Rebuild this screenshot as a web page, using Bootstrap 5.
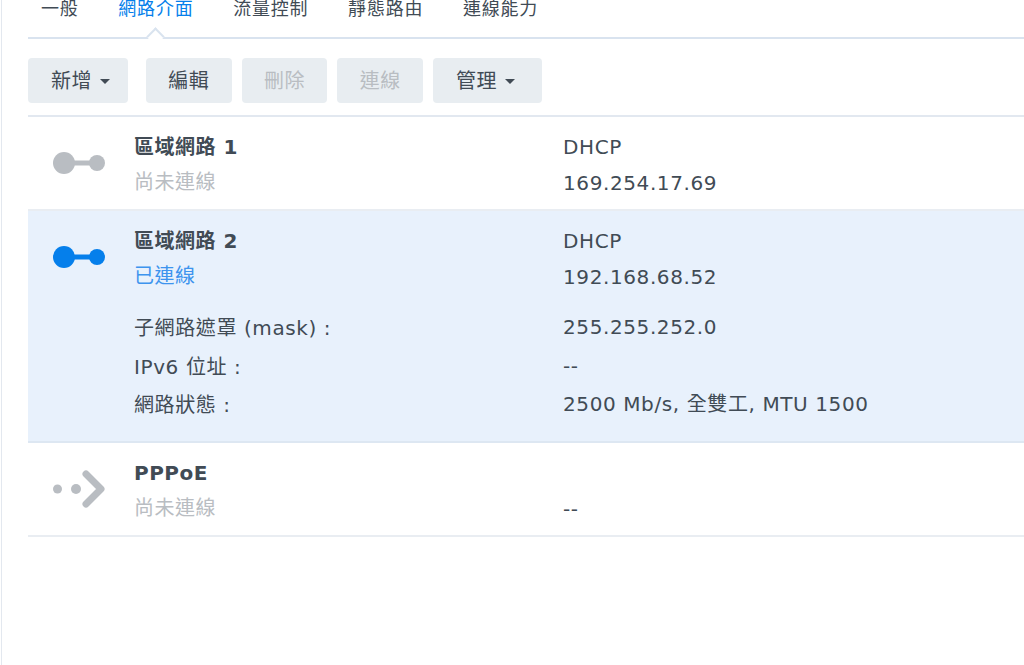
<!DOCTYPE html>
<html lang="zh-Hant"><head><meta charset="utf-8">
<link href="https://cdn.jsdelivr.net/npm/bootstrap@5.3.0/dist/css/bootstrap.min.css" rel="stylesheet">
<style>
html,body{height:100%;overflow:hidden}
body{font-family:"DejaVu Sans","Noto Sans CJK TC",sans-serif;color:#414b55;background:#fff}
.shell{height:665px;margin-left:1px;border-left:1px solid #e3e8ef;padding-left:26px;overflow:hidden}
.tabbar{margin-top:-6px;height:45px;border-bottom:2px solid #d9e3ef}
.tabitem{font-size:18px;line-height:30px;padding:0 13px;margin-right:13.7px;letter-spacing:.8px;color:#414b55}
.tabitem.on{color:#057feb;position:relative}
.tabitem.on::after{content:"";position:absolute;left:50%;bottom:-6px;width:13px;height:13px;margin-left:-7px;background:#fff;border-left:2px solid #d9e3ef;border-top:2px solid #d9e3ef;transform:rotate(45deg)}
.toolbar{gap:10px;padding:19px 0 12px;border-bottom:2px solid #e2e8f0;position:relative}
.tbtn{height:45px;border:0;border-radius:4px;background:#e8edf1;color:#414b55;font-size:20px;padding:2px 0 0;line-height:43px;display:flex;align-items:center;justify-content:center;letter-spacing:.5px}
.tbtn.lead-in{justify-content:flex-start;padding-left:23px}
.tbtn:hover{background:#e8edf1;color:#414b55}
.tbtn.btn:disabled{background:#e8edf1;color:#b9bdc2;opacity:1}
.w1{width:100px}.w2{width:85.7px}.w3{width:109px}
.caret{width:0;height:0;border:5.5px solid transparent;border-top-color:#414b55;border-bottom:0;margin-left:8px}
.netrow{display:flex;border-bottom:2px solid #e9edf2;font-size:20px;line-height:37.5px}
.netrow.on{background:#e8f1fc;border-bottom-color:#dde7f2}
.icoc{width:106px;flex:none;padding:15px 0 0 25px}
.namec{width:429px;flex:none}
.r1{height:94px;padding-top:12px}.r2{height:232px;padding-top:12px}.r3{height:94px;padding-top:12px}
.ttl{font-weight:700;letter-spacing:.5px;color:#414b55;line-height:37px}
.sub{color:#b9bdc2;line-height:32px;letter-spacing:.5px}
.sub.live{color:#3d94ee}
.detail{line-height:38.5px;letter-spacing:.6px}
.first-l{margin-top:17px}.first-r{margin-top:13px}
.val{line-height:37px;letter-spacing:.6px}
.val+.val{line-height:35px}
</style></head><body>
<div class="shell">
 <div class="tabbar d-flex">
  <div class="tabitem">一般</div><div class="tabitem on">網路介面</div><div class="tabitem">流量控制</div><div class="tabitem">靜態路由</div><div class="tabitem">連線能力</div>
 </div>
 <div class="toolbar d-flex">
  <button class="btn tbtn w1 lead-in me-2">新增<span class="caret"></span></button>
  <button class="btn tbtn w2">編輯</button>
  <button class="btn tbtn w2" disabled>刪除</button>
  <button class="btn tbtn w2" disabled>連線</button>
  <button class="btn tbtn w3 lead-in">管理<span class="caret"></span></button>
 </div>
 <div class="netrow r1">
  <div class="icoc"><svg width="54" height="26" viewBox="0 0 54 26"><circle cx="11" cy="12" r="11" fill="#b9bdc2"/><rect x="20" y="9.5" width="20" height="5" fill="#b9bdc2"/><circle cx="44" cy="12" r="8" fill="#b9bdc2"/></svg></div>
  <div class="namec"><div class="ttl">區域網路 1</div><div class="sub">尚未連線</div></div>
  <div><div class="val">DHCP</div><div class="val">169.254.17.69</div></div>
 </div>
 <div class="netrow on r2">
  <div class="icoc"><svg width="54" height="26" viewBox="0 0 54 26"><circle cx="11" cy="12" r="11" fill="#057feb"/><rect x="20" y="9.5" width="20" height="5" fill="#057feb"/><circle cx="44" cy="12" r="8" fill="#057feb"/></svg></div>
  <div class="namec"><div class="ttl">區域網路 2</div><div class="sub live">已連線</div>
   <div class="detail first-l">子網路遮罩 (mask) :</div><div class="detail">IPv6 位址 :</div><div class="detail">網路狀態 :</div></div>
  <div><div class="val">DHCP</div><div class="val">192.168.68.52</div>
   <div class="detail first-r">255.255.252.0</div><div class="detail">--</div><div class="detail">2500 Mb/s, 全雙工, MTU 1500</div></div>
 </div>
 <div class="netrow r3">
  <div class="icoc"><svg width="54" height="40" viewBox="0 0 54 40"><circle cx="4.5" cy="19" r="4.5" fill="#b9bdc2"/><circle cx="23" cy="19" r="5" fill="#b9bdc2"/><path d="M33 4 L48 19 L33 34" fill="none" stroke="#b9bdc2" stroke-width="7" stroke-linecap="round" stroke-linejoin="round"/></svg></div>
  <div class="namec"><div class="ttl">PPPoE</div><div class="sub">尚未連線</div></div>
  <div><div class="val">&nbsp;</div><div class="val">--</div></div>
 </div>
</div>
</body></html>
